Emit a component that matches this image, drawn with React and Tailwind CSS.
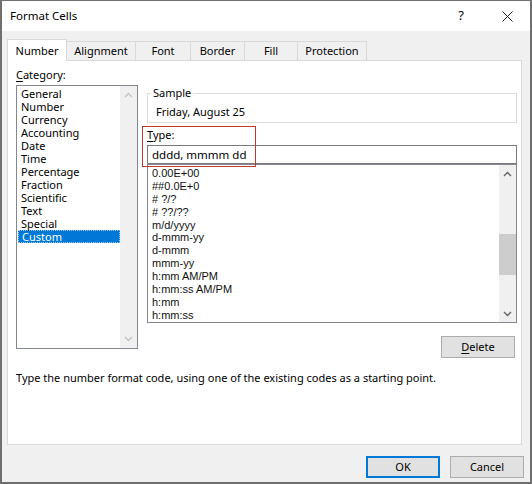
import React from "react";

const categories = [
  "General",
  "Number",
  "Currency",
  "Accounting",
  "Date",
  "Time",
  "Percentage",
  "Fraction",
  "Scientific",
  "Text",
  "Special",
  "Custom",
];

const formats = [
  "0.00E+00",
  "##0.0E+0",
  "# ?/?",
  "# ??/??",
  "m/d/yyyy",
  "d-mmm-yy",
  "d-mmm",
  "mmm-yy",
  "h:mm AM/PM",
  "h:mm:ss AM/PM",
  "h:mm",
  "h:mm:ss",
];

const tabs = [
  { label: "Number", w: "w-[60px]" },
  { label: "Alignment", w: "w-[69px]" },
  { label: "Font", w: "w-[55px]" },
  { label: "Border", w: "w-[54px]" },
  { label: "Fill", w: "w-[53px]" },
  { label: "Protection", w: "w-[69px]" },
];

const Chevron = ({ up, color }) => (
  <svg width="9" height="6" viewBox="0 0 9 6" fill="none">
    <path
      d={up ? "M1 5 L4.5 1.5 L8 5" : "M1 1 L4.5 4.5 L8 1"}
      stroke={color}
      strokeWidth="1.3"
    />
  </svg>
);

const App = () => {
  return (
    <div className="w-[532px] h-[484px] bg-[#f0f0f0] border-x-2 border-b-2 border-t border-[#6f6f6f] flex flex-col text-[11px] text-black font-['Noto_Sans',sans-serif]">
      {/* title bar */}
      <div className="h-[30px] bg-white flex items-center pl-[8px]">
        <span className="text-[11.5px] leading-[14px]">Format Cells</span>
        <div className="flex-1" />
        <div className="w-[46px] h-[30px] flex items-center justify-center text-[13px]">?</div>
        <div className="w-[46px] h-[30px] flex items-center justify-center">
          <svg width="11" height="11" viewBox="0 0 11 11">
            <path d="M0.5 0.5 L10.5 10.5 M10.5 0.5 L0.5 10.5" stroke="#222" strokeWidth="1" />
          </svg>
        </div>
      </div>

      <div className="flex-1 pl-[5px] flex flex-col">
        {/* tabs */}
        <div className="mt-[8px] h-[21px] flex items-end">
          {tabs.map((t, i) =>
            i === 0 ? (
              <div
                key={t.label}
                className={`${t.w} h-[22px] -mb-px relative z-10 bg-white border-x border-t border-[#d9d9d9] flex items-center justify-center leading-[14px]`}
              >
                {t.label}
              </div>
            ) : (
              <div
                key={t.label}
                className={`${t.w} h-[19px] border-r border-t border-[#d9d9d9] flex items-center justify-center leading-[14px]`}
              >
                {t.label}
              </div>
            )
          )}
        </div>

        {/* tab panel */}
        <div className="w-[515px] h-[385px] bg-white border border-[#d9d9d9] pt-[7px] pl-[8px]">
          <div className="flex gap-[9px]">
            {/* category */}
            <div className="w-[122px] flex flex-col">
              <div className="h-[17px] leading-[14px]">
                <span className="underline underline-offset-2">C</span>ategory:
              </div>
              <div className="h-[264px] border border-[#828790] flex">
                <div className="flex-1 pt-[1px]">
                  {categories.map((c) =>
                    c === "Custom" ? (
                      <div
                        key={c}
                        className="ml-[1px] h-[13px] leading-[11px] pl-[3px] bg-[#0078d7] text-white border border-dotted border-[#9fc6ec]"
                      >
                        {c}
                      </div>
                    ) : (
                      <div key={c} className="h-[13px] leading-[13px] pl-[4px]">
                        {c}
                      </div>
                    )
                  )}
                </div>
                <div className="w-[17px] bg-[#f0f0f0] flex flex-col justify-between items-center py-[6px]">
                  <Chevron up color="#c2c2c2" />
                  <Chevron color="#c2c2c2" />
                </div>
              </div>
            </div>

            {/* right side */}
            <div className="w-[370px] flex flex-col relative">
              <fieldset className="mt-[18px] border border-[#dcdcdc] pl-[3px]">
                <legend className="px-[2px] leading-[14px]">Sample</legend>
                <div className="h-[22px] pt-[5px] pl-[5px] leading-[14px]">Friday, August 25</div>
              </fieldset>

              <div className="mt-[5px] h-[17px] leading-[14px]">
                <span className="underline underline-offset-2">T</span>ype:
              </div>
              <div className="h-[19px] border border-[#7a7a7a] pl-[4px] leading-[17px] text-[11.5px]">
                dddd, mmmm dd
              </div>
              <div className="h-[159px] border border-[#828790] flex">
                <div className="flex-1 pl-[4px] pt-[2px] font-['Liberation_Sans',Arial,sans-serif] text-[11px] text-[#111]">
                  {formats.map((f) => (
                    <div key={f} className="h-[12.9px] leading-[12.9px] whitespace-pre">
                      {f}
                    </div>
                  ))}
                </div>
                <div className="w-[17px] bg-[#f0f0f0] flex flex-col items-center">
                  <div className="h-[17px] flex items-center justify-center">
                    <Chevron up color="#606060" />
                  </div>
                  <div className="flex-1 w-full">
                    <div className="mt-[52px] h-[41px] w-full bg-[#cdcdcd]" />
                  </div>
                  <div className="h-[17px] flex items-center justify-center">
                    <Chevron color="#606060" />
                  </div>
                </div>
              </div>

              <button className="self-end mr-[2px] mt-[13px] w-[74px] h-[22px] border border-[#adadad] bg-[#e1e1e1] leading-[14px]">
                <span className="underline underline-offset-2">D</span>elete
              </button>

              {/* annotation */}
              <div className="absolute left-[-5px] top-[58px] w-[114px] h-[41px] border border-[#c0392b]" />
            </div>
          </div>

          <div className="mt-[13px] leading-[14px]">
            Type the number format code, using one of the existing codes as a starting point.
          </div>
        </div>

        {/* dialog buttons */}
        <div className="mt-[11px] flex justify-end gap-[10px] pr-[6px]">
          <button className="w-[74px] h-[22px] border-2 border-[#0078d7] bg-[#e1e1e1] leading-[14px]">OK</button>
          <button className="w-[74px] h-[22px] border border-[#adadad] bg-[#e1e1e1] leading-[14px]">Cancel</button>
        </div>
      </div>
    </div>
  );
};

export default App;
